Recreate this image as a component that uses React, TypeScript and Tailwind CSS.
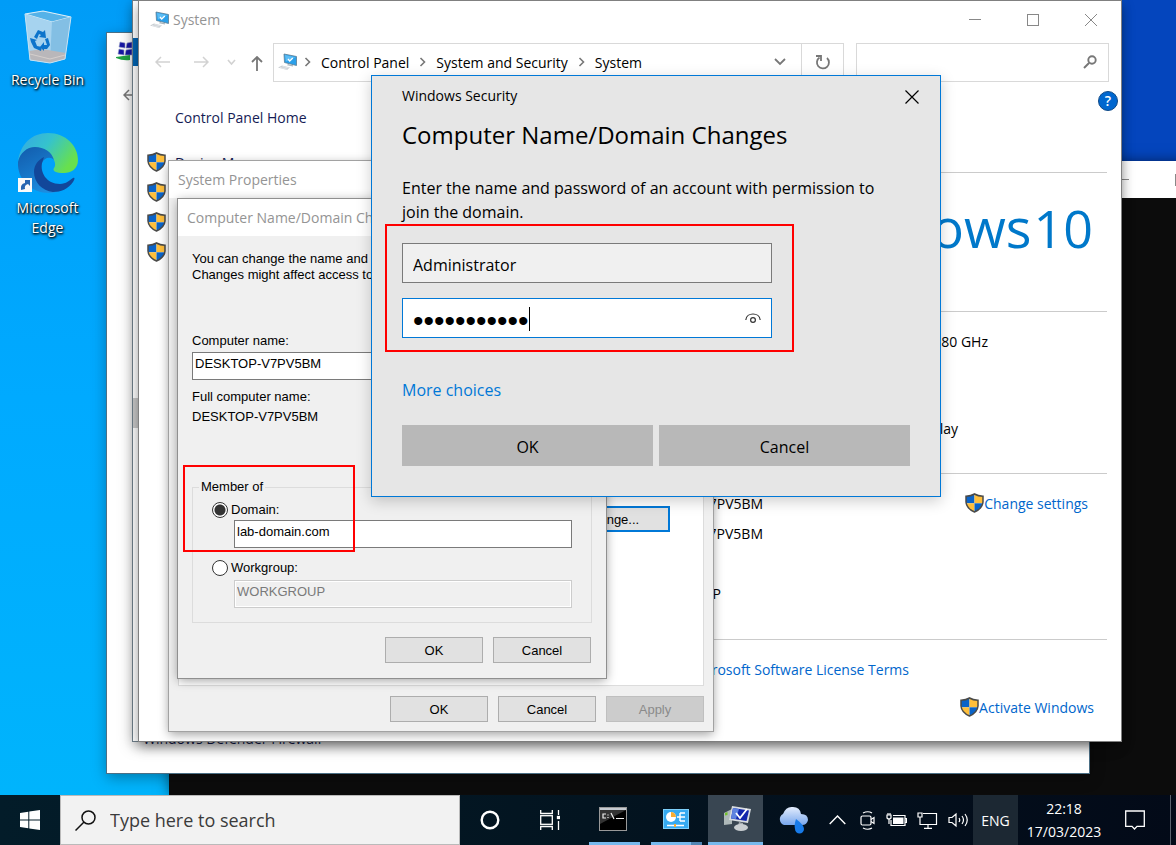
import type { ReactNode } from "react";

const ui = "font-['Open_Sans','Noto_Sans',sans-serif]";
const classic = "font-['Liberation_Sans',Arial,sans-serif]";

function Shield() {
  return (
    <svg width="19" height="20" viewBox="0 0 19 20" className="shrink-0" aria-hidden="true">
      <clipPath id="shield-clip">
        <path d="M9.500 1Q13 3.200 18 3.200V9Q17.500 15.500 9.500 19Q1.500 15.500 1 9V3.200Q6 3.200 9.500 1Z" />
      </clipPath>
      <g clipPath="url(#shield-clip)">
        <rect width="9.500" height="10.300" fill="#0a63c8" />
        <rect x="9.500" width="9.500" height="10.300" fill="#ffbf3b" />
        <rect y="10.300" width="9.500" height="10" fill="#ffbf3b" />
        <rect x="9.500" y="10.300" width="9.500" height="10" fill="#0a63c8" />
      </g>
      <path d="M9.500 1Q13 3.200 18 3.200V9Q17.500 15.500 9.500 19Q1.500 15.500 1 9V3.200Q6 3.200 9.500 1Z" fill="none" stroke="#4a4a48" strokeWidth="1.500" />
    </svg>
  );
}

function ComputerIcon() {
  return (
    <svg width="20" height="18" viewBox="0 0 20 18" className="shrink-0" aria-hidden="true">
      <path d="M6 1L18.500 3.500V12.500L6.500 9.500Z" fill="#2ba0ea" stroke="#5b7d94" strokeWidth=".8" />
      <path d="M7 2L17.500 4.200L8 8.500Z" fill="#5cbdf5" />
      <path d="M10 6L11.700 8L14.800 5" fill="none" stroke="#fff" strokeWidth="1.300" />
      <path d="M0 14.500L4 12.500L12 14.500L9 17Z" fill="#c9ced2" />
      <path d="M2 14.500L9 16.200M4.500 13.500L11 15" stroke="#eef1f3" strokeWidth=".7" />
      <path d="M10 11L15 12.300V13.500L9 12.300Z" fill="#a9b5bd" />
    </svg>
  );
}

function RecycleBin() {
  return (
    <svg width="50" height="56" viewBox="0 0 50 56" aria-hidden="true">
      <path d="M2 4L20 1L48 7L42 49L27 53L7 50Z" fill="#9ed2f2" />
      <path d="M2 4L20 1L48 7L29 12Z" fill="#55b2e8" stroke="#d9edf8" strokeWidth="1.200" />
      <path d="M2 4L29 12L27 53L7 50Z" fill="#a6d3ef" />
      <path d="M29 12L48 7L42 49L27 53Z" fill="#83bfe4" />
      <path d="M6 41L19 39L43 43L42 49L27 53L7 50Z" fill="#b9b7ba" />
      <path d="M7 44L27 49L42 45" fill="none" stroke="#d5cfcd" />
      <path d="M2 4L7 50L27 53L42 49L48 7" fill="none" stroke="#c5e2f3" strokeWidth="1" />
      <g fill="#0c74cb">
        <path d="M11 27L15 20L20 22L22 20L23 28L16 27L18 25L16 24L14 29Z" />
        <path d="M7 28L14 30L12 31L14 36L19 37L18 41L11 38L8 32Z" />
        <path d="M17 37L21 32V35H24L22 29L25 28L27 35L24 39H21V41Z" />
      </g>
    </svg>
  );
}

function EdgeLogo() {
  return (
    <svg width="62" height="62" viewBox="0 0 62 62" aria-hidden="true">
      <defs>
        <linearGradient id="edge-a" x1="0" y1="0" x2="1" y2=".5">
          <stop offset="0" stopColor="#35a6e8" />
          <stop offset=".5" stopColor="#35c3cd" />
          <stop offset="1" stopColor="#68e04d" />
        </linearGradient>
        <linearGradient id="edge-b" x1="0" y1="0" x2=".6" y2="1">
          <stop offset="0" stopColor="#125bab" />
          <stop offset="1" stopColor="#1d8fe2" />
        </linearGradient>
      </defs>
      <path d="M1 30C3 12 15 1 31 1C49 1 61 14 61 28C61 37 54 41 47 41C39 41 35 39 37 36C39 33 38 31 37 28C33 20 24 15 15 16C8 17 3 22 1 30Z" fill="url(#edge-a)" />
      <path d="M1 30C3 21 10 15 18 15C27 15 35 20 37 28C33 24 27 26 25 31C22 39 27 50 37 54C43 57 48 54 52 52C45 59 38 61 32 61C15 61 0 48 1 30Z" fill="url(#edge-b)" />
      <path d="M25 31C23 40 29 52 43 52C49 52 53 48 56 46C58 45 58 47 56 50C51 57 44 60 36 60C25 59 17 50 17 40C17 33 21 28 27 25Z" fill="#12479a" />
      <rect x="1" y="46" width="14" height="14" fill="#fafafa" />
      <path d="M4 58Q3 52 8 51V48H13V54L11 52Q7 53 8 57Z" fill="#2866b1" />
    </svg>
  );
}

function Caption({ children, className }: { children: ReactNode; className?: string }) {
  return <div className={`flex h-[37px] items-center bg-white text-[14px] text-[#949494] ${className ?? ""}`}>{children}</div>;
}

function ClassicButton({ children, disabled, focused }: { children: string; disabled?: boolean; focused?: boolean }) {
  const look = disabled
    ? "w-[98px] border border-[#bfbfbf] bg-[#cccccc] text-[#8a8a8a]"
    : focused
      ? "w-[118px] border-2 border-[#0078d7] bg-[#e1e1e1] text-black"
      : "w-[98px] border border-[#adadad] bg-[#e1e1e1] text-black";
  return (
    <button disabled={disabled} className={`h-[26px] pt-[2px] text-[13px] ${look}`}>
      {children}
    </button>
  );
}

function DesktopShortcut({ label, children }: { label: string; children: ReactNode }) {
  return (
    <button className="flex w-[95px] flex-col items-center text-[14px] leading-5 text-white [text-shadow:1px_1px_2px_#000,0_1px_3px_#000]">
      {children}
      <span className="mt-1">{label}</span>
    </button>
  );
}

function ConsoleWindow() {
  return (
    <section className="absolute top-[161px] right-[-80px] bottom-0 left-[169px] bg-[#0c0c0c] shadow-[0_0_12px_rgba(0,0,0,.5)]">
      <div className="flex h-[37px] items-center justify-end gap-[46px] bg-white pr-[69px]">
        <svg width="12" height="12" aria-hidden="true"><path d="M0 5.500H12" stroke="#888" /></svg>
        <svg width="12" height="12" aria-hidden="true"><rect x=".5" y=".5" width="11" height="11" fill="none" stroke="#888" /></svg>
      </div>
    </section>
  );
}

function ServerWindow() {
  return (
    <section className="absolute top-[33px] left-[107px] flex h-[740px] w-[982px] flex-col bg-white shadow-[0_0_0_1px_#4b6f85,0_4px_14px_rgba(0,0,0,.35)]">
      <div className="flex h-9 items-center pl-[9px]">
        <svg width="22" height="22" viewBox="0 0 22 22" aria-hidden="true">
          <path d="M4 2L9 3V8L3 7ZM11 3L16 2V8L10 8ZM3 9L8 10V15L2 14ZM10 10L16 9V15L9 15Z" fill="#1717a4" stroke="#9aa2c9" strokeWidth=".6" />
          <path d="M0 17L14 15V20Q7 21 0 18Z" fill="#22a344" />
        </svg>
      </div>
      <div className="flex h-[52px] items-center pl-4">
        <svg width="14" height="12" viewBox="0 0 14 12" fill="none" stroke="#777" strokeWidth="1.500" aria-hidden="true"><path d="M6 1L1 6L6 11M1 6H14" /></svg>
      </div>
      <a href="#firewall" className="mt-auto mb-6 ml-9 text-[14px] leading-5 text-[#151c55]">Windows Defender Firewall</a>
    </section>
  );
}

function RearSystemWindow() {
  return (
    <section className="absolute top-px left-[133px] flex h-[740px] w-[982px] flex-col bg-white shadow-[0_0_0_1px_#6d7d88,0_4px_14px_rgba(0,0,0,.35)]">
      <div className="mt-[37px] h-7 bg-[#0063b1]" />
      <div className="mt-[332px] h-[30px] bg-[#c9c9c9]" />
    </section>
  );
}

function Chevron() {
  return <svg width="7" height="10" viewBox="0 0 7 10" fill="none" stroke="#777" strokeWidth="1.600" aria-hidden="true"><path d="M1.500 1L5.500 5L1.500 9" /></svg>;
}

function SystemWindow() {
  const rule = "border-b border-[#cbcbcb]";
  return (
    <section className="absolute top-px left-[139px] flex h-[740px] w-[982px] flex-col bg-white text-[14px] text-black shadow-[0_0_0_1px_#808080,0_4px_12px_rgba(0,0,0,.45)]">
      <Caption className="gap-[3px] pl-[11px]">
        <ComputerIcon />
        <span>System</span>
        <div className="ml-auto flex items-center gap-[46px] pr-6">
          <button aria-label="Minimize"><svg width="12" height="12" aria-hidden="true"><path d="M0 5.500H12" stroke="#888" /></svg></button>
          <button aria-label="Maximize"><svg width="12" height="12" aria-hidden="true"><rect x=".5" y=".5" width="11" height="11" fill="none" stroke="#888" /></svg></button>
          <button aria-label="Close"><svg width="12" height="12" aria-hidden="true"><path d="M0 0L12 12M12 0L0 12" stroke="#888" /></svg></button>
        </div>
      </Caption>
      <div className="flex h-12 items-center pr-3 pl-4">
        <div className="flex w-[118px] shrink-0 items-center">
          <svg width="15" height="12" viewBox="0 0 15 12" fill="none" stroke="#d2d2d2" strokeWidth="1.500" aria-hidden="true"><path d="M6 1L1 6L6 11M1 6H15" /></svg>
          <svg width="15" height="12" viewBox="0 0 15 12" fill="none" stroke="#d2d2d2" strokeWidth="1.500" className="ml-6" aria-hidden="true"><path d="M9 1L14 6L9 11M14 6H0" /></svg>
          <svg width="9" height="7" viewBox="0 0 9 7" fill="none" stroke="#d2d2d2" strokeWidth="1.600" className="ml-[18px]" aria-hidden="true"><path d="M1 1L4.500 5L8 1" /></svg>
          <svg width="12" height="15" viewBox="0 0 12 15" fill="none" stroke="#777" strokeWidth="1.800" className="mt-[3px] ml-[15px]" aria-hidden="true"><path d="M1 6L6 1L11 6M6 1V15" /></svg>
        </div>
        <nav className="flex h-[39px] flex-1 items-center border border-[#d9d9d9] pl-1">
          <ComputerIcon />
          <span className="ml-[6px] flex items-center gap-[10px]">
            <Chevron /><a href="#panel">Control Panel</a>
            <Chevron /><a href="#security">System and Security</a>
            <Chevron /><a href="#system">System</a>
          </span>
          <button aria-label="Recent locations" className="mr-[15px] ml-auto">
            <svg width="12" height="8" viewBox="0 0 12 8" fill="none" stroke="#777" strokeWidth="1.800" aria-hidden="true"><path d="M1 1L6 6L11 1" /></svg>
          </button>
          <button aria-label="Refresh" className="flex h-full w-[42px] items-center justify-center border-l border-[#d9d9d9]">
            <svg width="16" height="16" viewBox="0 0 16 16" fill="none" stroke="#777" strokeWidth="1.800" aria-hidden="true"><path d="M4.500 3.500A6 6 0 1 0 12 4M1 2H6V7" /></svg>
          </button>
        </nav>
        <label className="ml-3 flex h-[39px] w-[253px] items-center border border-[#d9d9d9] pr-[11px]">
          <input aria-label="Search Control Panel" className="w-full min-w-0 flex-1 outline-none" />
          <svg width="14" height="14" viewBox="0 0 14 14" fill="none" stroke="#777" aria-hidden="true"><circle cx="9" cy="5" r="3.700" strokeWidth="1.900" /><path d="M6 8L1 13" strokeWidth="2" /></svg>
        </label>
      </div>
      <div className="flex min-h-0 flex-1">
        <aside className="flex w-[190px] flex-col pt-[21px] pl-2">
          <a href="#home" className="mb-[18px] ml-7 leading-[22px] whitespace-nowrap text-[#151c55]">Control Panel Home</a>
          <a href="#devices" className="flex h-[30px] items-center gap-[9px] whitespace-nowrap text-[#151c55]"><Shield />Device Manager</a>
          <a href="#remote" aria-label="Remote settings" className="flex h-[30px] items-center"><Shield /></a>
          <a href="#protection" aria-label="System protection" className="flex h-[30px] items-center"><Shield /></a>
          <a href="#advanced" aria-label="Advanced system settings" className="flex h-[30px] items-center"><Shield /></a>
        </aside>
        <main className="flex flex-1 flex-col pr-[14px] text-right">
          <div className={`flex h-[87px] justify-end ${rule}`}>
            <button aria-label="Help" className="mt-[5px] -mr-[11px] h-5 w-5 rounded-full border border-[#104a86] bg-[#0067cf] text-[14px] leading-[18px] font-semibold text-white">?</button>
          </div>
          <div className={`flex h-[139px] items-baseline justify-end gap-[2px] pt-[18px] pr-[14px] leading-[72px] text-[#0078ca] ${rule}`}>
            <span className="text-[54px]">Windows</span>
            <span className="text-[52px]">10</span>
          </div>
          <div className={`flex h-[162px] flex-col ${rule}`}>
            <p className="mt-5 pr-[119px] leading-5">2.80 GHz</p>
            <p className="mt-[67px] pr-[149px] leading-5">Display</p>
          </div>
          <div className={`flex h-[166px] flex-col ${rule}`}>
            <div className="mt-[19px] flex h-5 items-center justify-end">
              <span className="pr-[202px]">DESKTOP-V7PV5BM</span>
              <a href="#change" className="mr-[19px] flex items-center text-[#0066cc]"><Shield />Change settings</a>
            </div>
            <p className="mt-[11px] pr-[344px] leading-5">DESKTOP-V7PV5BM</p>
            <p className="mt-10 pr-[386px] leading-5">WORKGROUP</p>
          </div>
          <a href="#terms" className="mt-5 pr-[198px] leading-5 text-[#0066cc]">Microsoft Software License Terms</a>
          <a href="#activate" className="mt-[17px] mr-[13px] flex h-5 items-center justify-end text-[#0066cc]"><Shield />Activate Windows</a>
        </main>
      </div>
    </section>
  );
}

function PropertiesDialog() {
  return (
    <section className="absolute top-[161px] left-[169px] flex h-[570px] w-[544px] flex-col bg-[#f0f0f0] shadow-[0_0_0_1px_#a2a2a2,0_3px_10px_rgba(0,0,0,.4)]">
      <Caption className="pl-[9px]">System Properties</Caption>
      <div className={`flex min-h-0 flex-1 flex-col gap-[10px] p-[9px] ${classic}`}>
        <div className="flex flex-1 items-end justify-end border border-[#dcdcdc] bg-white pr-[33px] pb-[153px]">
          <ClassicButton focused>Change...</ClassicButton>
        </div>
        <div className="flex justify-end gap-[10px]">
          <ClassicButton>OK</ClassicButton>
          <ClassicButton>Cancel</ClassicButton>
          <ClassicButton disabled>Apply</ClassicButton>
        </div>
      </div>
    </section>
  );
}

function RenameDialog() {
  const radio = "h-4 w-4 appearance-none rounded-full border border-[#333] bg-white checked:bg-[radial-gradient(circle,#333_5px,#fff_6px)]";
  return (
    <section className="absolute top-[199px] left-[178px] flex h-[479px] w-[428px] flex-col bg-[#f0f0f0] shadow-[0_0_0_1px_#8f8f8f,0_2px_10px_rgba(0,0,0,.4)]">
      <Caption className="pl-[9px] whitespace-nowrap">Computer Name/Domain Changes</Caption>
      <form className={`flex flex-1 flex-col pt-[15px] pr-[15px] pb-[15px] pl-[14px] text-[13px] leading-4 text-black ${classic}`}>
        <p>You can change the name and the membership of this computer. Changes might affect access to network resources.</p>
        <label htmlFor="computer-name" className="mt-[50px]">Computer name:</label>
        <input id="computer-name" defaultValue="DESKTOP-V7PV5BM" className="mt-[3px] h-7 border border-[#7a7a7a] bg-white px-[2px] pb-[6px] outline-none" />
        <p className="mt-[9px]">Full computer name:</p>
        <p className="mt-1">DESKTOP-V7PV5BM</p>
        <fieldset className="mt-[54px] h-[144px] border border-[#dcdcdc] pr-[19px] pl-[19px]">
          <legend className="-ml-[13px] px-[2px]">Member of</legend>
          <label className="mt-[7px] flex h-4 items-center gap-[3px]">
            <input type="radio" name="member" defaultChecked className={radio} />Domain:
          </label>
          <input aria-label="Domain name" defaultValue="lab-domain.com" className="mt-[2px] ml-[22px] block h-7 w-[338px] border border-[#7a7a7a] bg-white px-[2px] pb-[6px] outline-none" />
          <label className="mt-3 flex h-4 items-center gap-[3px]">
            <input type="radio" name="member" className={radio} />Workgroup:
          </label>
          <input aria-label="Workgroup name" disabled defaultValue="WORKGROUP" className="mt-1 ml-[22px] block h-7 w-[338px] border border-[#cccccc] bg-[#f0f0f0] px-[2px] pb-[6px] text-[#7a7a7a] shadow-[inset_0_0_0_1px_#fff]" />
        </fieldset>
        <div className="mt-auto flex justify-end gap-[10px]">
          <ClassicButton>OK</ClassicButton>
          <ClassicButton>Cancel</ClassicButton>
        </div>
      </form>
    </section>
  );
}

function SecurityDialog() {
  return (
    <section role="dialog" aria-label="Windows Security" className="absolute top-[75px] left-[371px] flex h-[422px] w-[570px] flex-col border border-[#0078d7] bg-[#e6e6e6] px-[30px] text-black shadow-[0_4px_14px_rgba(0,0,0,.2)]">
      <div className="flex h-[38px] items-center justify-between text-[14px]">
        <span>Windows Security</span>
        <button aria-label="Close" className="mt-1 mr-[-9px]"><svg width="14" height="14" viewBox="0 0 14 14" aria-hidden="true"><path d="M.5 .5L13.500 13.500M13.500 .5L.5 13.500" stroke="#000" strokeWidth="1.200" /></svg></button>
      </div>
      <h1 className="mt-px text-[24px] leading-10">Computer Name/Domain Changes</h1>
      <p className="mt-[21px] pr-[30px] text-[16px] leading-6">Enter the name and password of an account with permission to join the domain.</p>
      <form className="mt-[19px] flex flex-1 flex-col text-[16px]">
        <input aria-label="User name" defaultValue="Administrator" className="h-10 w-[370px] border border-[#7a7a7a] bg-[#f0f0f0] px-[10px] pt-[3px] outline-none" />
        <div className="relative mt-[15px] flex h-10 w-[370px] items-center border border-[#0078d7] bg-white px-[10px]">
          <input aria-label="Password" type="password" defaultValue="xxxxxxxxxxx" className="h-full min-w-0 flex-1 pt-[6px] font-['Liberation_Sans'] text-[30px] outline-none" />
          <span className="absolute top-2 left-[126px] h-6 w-px bg-black" />
          <button type="button" aria-label="Show password">
            <svg width="16" height="11" viewBox="0 0 16 11" fill="none" stroke="#333" strokeWidth="1.200" aria-hidden="true"><path d="M.8 7C1.500 -1 14.500 -1 15.200 7" /><circle cx="8" cy="7" r="2.400" /></svg>
          </button>
        </div>
        <a href="#choices" className="mt-10 leading-6 text-[#0078d7]">More choices</a>
        <div className="mt-[23px] flex gap-[6px]">
          <button className="h-[41px] flex-1 bg-[#b8b8b8] pt-[2px]">OK</button>
          <button className="h-[41px] flex-1 bg-[#b8b8b8] pt-[2px]">Cancel</button>
        </div>
      </form>
    </section>
  );
}

function Taskbar() {
  const app = "flex h-full items-center justify-center";
  return (
    <footer className="relative flex h-[50px] shrink-0 items-stretch bg-[linear-gradient(90deg,#031c29,#031420_50%,#030a18)] text-white">
      <button aria-label="Start" className={`${app} w-[60px]`}>
        <svg width="20" height="20" viewBox="0 0 20 20" fill="#fff" aria-hidden="true"><path d="M0 3L8.300 1.800V9.500H0ZM9.300 1.600L20 0V9.500H9.300ZM0 10.500H8.300V18.200L0 17ZM9.300 10.500H20V20L9.300 18.400Z" /></svg>
      </button>
      <label className="flex w-[400px] items-center border border-[#bababa] bg-[#f2f2f2] pl-[14px]">
        <svg width="21" height="21" viewBox="0 0 21 21" fill="none" stroke="#111" strokeWidth="1.500" aria-hidden="true"><circle cx="13.500" cy="7.500" r="6.500" /><path d="M9 12L.5 20.500" /></svg>
        <input aria-label="Search" placeholder="Type here to search" className="ml-[14px] min-w-0 flex-1 text-[18px] outline-none placeholder:text-[#3b3b3b]" />
      </label>
      <button aria-label="Cortana" className={`${app} w-[60px]`}><svg width="20" height="20" aria-hidden="true"><circle cx="10" cy="10" r="8.300" fill="none" stroke="#fff" strokeWidth="2.400" /></svg></button>
      <button aria-label="Task view" className={`${app} w-[60px]`}>
        <svg width="20" height="20" viewBox="0 0 20 20" fill="none" stroke="#fff" strokeWidth="1.300" aria-hidden="true"><path d="M.7 0V3.500H12.300V0M.7 20V16.500H12.300V20M18.500 0V5M18.500 11V20" /><rect x=".7" y="5.700" width="11.600" height="8.600" /><rect x="17.500" y="6.500" width="2" height="2" fill="#fff" /></svg>
      </button>
      <button aria-label="Command Prompt" className={`${app} mr-[11px] ml-[9px] w-[51px] border-b-[3px] border-[#76b9ed] pr-[3px]`}>
        <svg width="28" height="24" viewBox="0 0 28 24" aria-hidden="true"><rect x=".5" y=".5" width="27" height="23" fill="#000" stroke="#999" /><path d="M1 1H27V3H1Z" fill="#c6cad0" /><path d="M1 3H27L1 17Z" fill="#333" /><path d="M7 7H4V11H7M9 7.500V8.500M9 10V11M12 6L15 12M17 11.500H25" fill="none" stroke="#eee" strokeWidth="1.200" /></svg>
      </button>
      <button aria-label="Control Panel" className={`${app} relative mr-[6px] w-[51px] border-b-[3px] border-[#76b9ed] pr-[2px]`}>
        <svg width="26" height="20" viewBox="0 0 26 20" aria-hidden="true"><rect x=".5" y=".5" width="25" height="19" fill="#36aaf0" stroke="#7ed0fb" /><circle cx="8" cy="8" r="5" fill="#fff" /><path d="M8 8V3A5 5 0 0 1 13 8Z" fill="#f8ad31" /><path d="M14 8H17M17 4V12M17 4H22M17 8H22M17 12H22M4 16.500H21" stroke="#fff" strokeWidth="1.400" fill="none" /><path d="M12 15V18" stroke="#f8ad31" strokeWidth="2" /></svg>
        <span className="absolute right-0 -bottom-[3px] h-[3px] w-[11px] bg-[#5185b3]" />
      </button>
      <button aria-label="System Properties" className={`${app} w-[55px] border-b-[3px] border-[#76b9ed] bg-[#394652] pl-1`}>
        <svg width="28" height="27" viewBox="0 0 28 27" aria-hidden="true">
          <path d="M0 8L8 4V19L0 20Z" fill="#aeb8b8" />
          <path d="M1 8L3.500 7V10L1 10.500Z" fill="#72bf2c" />
          <path d="M8 1L27 4L24 18L5 15Z" fill="#d8dce0" />
          <path d="M9 3L25 5.500L22.500 16L7 13.500Z" fill="#1226ac" />
          <path d="M9 3L15 4L12 14L7 13.500Z" fill="#5e83df" />
          <path d="M12 8L16 13L23 4" fill="none" stroke="#fff" strokeWidth="1.800" />
          <path d="M15 17L19 18V21H14Z" fill="#a5abb1" />
          <ellipse cx="17" cy="22.500" rx="7" ry="3.500" fill="#c9ced1" />
        </svg>
      </button>
      <button aria-label="Weather" className={`${app} w-[60px]`}>
        <svg width="31" height="28" viewBox="0 0 31 28" aria-hidden="true"><defs><linearGradient id="cloud" x1="0" y1="0" x2="0" y2="1"><stop stopColor="#e4edfd" /><stop offset="1" stopColor="#78a7ed" /></linearGradient></defs><path d="M6 19A6 6 0 0 1 5 8Q8 0 15 1Q22 1 23 8Q30 8 30 14Q29 19 24 19Z" fill="url(#cloud)" /><path d="M18 13Q26 19 26 23A4.500 4.500 0 0 1 17 23Q16 19 18 13Z" fill="#187be9" /></svg>
      </button>
      <div className="ml-auto flex items-center">
        <div className="flex items-center gap-[10px] pr-[4px]">
          <svg width="17" height="10" viewBox="0 0 17 10" fill="none" stroke="#fff" strokeWidth="1.400" className="mr-[4px]" aria-hidden="true"><path d="M.7 9L8.500 1L16.300 9" /></svg>
          <svg width="16" height="19" viewBox="0 0 16 19" fill="none" stroke="#fff" strokeWidth="1.200" aria-hidden="true"><rect x="1" y="5" width="10" height="9" rx="1.500" /><path d="M11 8.500L14 6.500V12.500L11 10.500M3 2Q8 -.5 12 2M3 17Q8 19.500 12 17" /></svg>
          <svg width="21" height="14" viewBox="0 0 21 14" fill="none" stroke="#fff" strokeWidth="1.200" aria-hidden="true"><rect x="7" y="4.500" width="10.500" height="6.500" fill="#fff" stroke="none" /><path d="M7 2.500H19V12.500H5V7M19 5.500H20.400V9.500H19M1 2H5V5Q3 7 1 5ZM2 0V2M4 0V2M3 6V11" /></svg>
          <svg width="21" height="17" viewBox="0 0 21 17" fill="none" stroke="#fff" strokeWidth="1.200" aria-hidden="true"><path d="M6 1.500H19.500V12.500H3V7M11 12.500V16M7 16.300H15M1 1H5V5H1ZM3 5V8" /></svg>
          <svg width="21" height="16" viewBox="0 0 21 16" fill="none" stroke="#fff" strokeWidth="1.200" aria-hidden="true"><path d="M1 5.500H4L8 2V14L4 10.500H1ZM11 6Q12.500 8 11 10M14 4Q17 8 14 12M17 2Q21.500 8 17 14" /></svg>
        </div>
        <button className="h-full w-[45px] bg-[#1c2833] text-[14px]">ENG</button>
        <time className="w-[92px] text-center text-[14px] leading-[23px]">22:18<br />17/03/2023</time>
        <button aria-label="Notifications" className="mr-[25px] ml-[15px]"><svg width="20" height="20" viewBox="0 0 20 20" fill="none" stroke="#fff" strokeWidth="1.300" aria-hidden="true"><path d="M.7 1H19.300V16.300H12L9.500 19L7 16.300H.7Z" /></svg></button>
        <span className="mr-[5px] h-full w-px bg-[#5a626d]" />
      </div>
    </footer>
  );
}

export default function App() {
  return (
    <div className={`flex h-screen flex-col overflow-hidden ${ui}`}>
      <div className="relative min-h-0 flex-1 overflow-hidden bg-[linear-gradient(90deg,transparent_85%,#0445bd_96%),linear-gradient(180deg,#009cf7,#00aaff_50%,#00b4fc)]">
        <div className="flex flex-col items-start gap-[42px] pt-[10px]">
          <DesktopShortcut label="Recycle Bin"><RecycleBin /></DesktopShortcut>
          <DesktopShortcut label="Microsoft Edge"><EdgeLogo /></DesktopShortcut>
        </div>
        <ConsoleWindow />
        <ServerWindow />
        <RearSystemWindow />
        <SystemWindow />
        <PropertiesDialog />
        <RenameDialog />
        <SecurityDialog />
        <div className="pointer-events-none absolute top-[465px] left-[183px] h-[87px] w-[172px] border-2 border-[#ff0000]" />
        <div className="pointer-events-none absolute top-[224px] left-[385px] h-[128px] w-[409px] border-2 border-[#ff0000]" />
      </div>
      <Taskbar />
    </div>
  );
}
